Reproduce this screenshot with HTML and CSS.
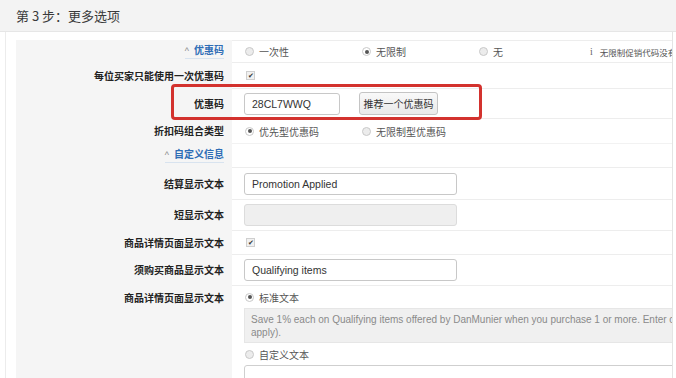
FILE: index.html
```html
<!DOCTYPE html>
<html lang="zh-CN">
<head>
<meta charset="utf-8">
<link rel="stylesheet" href="styles.css">
</head>
<body>
<div class="header"><h1>第 3 步：更多选项</h1></div>
<div class="panel">
  <div class="form">
    <div class="row r1">
      <div class="label"><span class="link"><span class="chev">^</span>优惠码</span></div>
      <div class="value">
        <span class="opt"><span class="radio"></span>一次性</span>
        <span class="opt"><span class="radio on"></span>无限制</span>
        <span class="opt narrow"><span class="radio"></span>无</span>
        <span class="info"><span class="i">i</span>无限制促销代码没有使用限制</span>
      </div>
    </div>
    <div class="row r2">
      <div class="label">每位买家只能使用一次优惠码</div>
      <div class="value"><span class="check">✔</span></div>
    </div>
    <div class="row r3">
      <div class="label">优惠码</div>
      <div class="value">
        <span class="input short">28CL7WWQ</span>
        <span class="btn">推荐一个优惠码</span>
      </div>
    </div>
    <div class="row r4">
      <div class="label">折扣码组合类型</div>
      <div class="value">
        <span class="opt"><span class="radio on"></span>优先型优惠码</span>
        <span class="opt"><span class="radio"></span>无限制型优惠码</span>
      </div>
    </div>
    <div class="row r5">
      <div class="label"><span class="link"><span class="chev">^</span>自定义信息</span></div>
      <div class="value"></div>
    </div>
    <div class="row r6">
      <div class="label">结算显示文本</div>
      <div class="value"><span class="input wide">Promotion Applied</span></div>
    </div>
    <div class="row r7">
      <div class="label">短显示文本</div>
      <div class="value"><span class="input wide disabled"></span></div>
    </div>
    <div class="row r8">
      <div class="label">商品详情页面显示文本</div>
      <div class="value"><span class="check">✔</span></div>
    </div>
    <div class="row r9">
      <div class="label">须购买商品显示文本</div>
      <div class="value"><span class="input wide">Qualifying items</span></div>
    </div>
    <div class="row r10">
      <div class="label">商品详情页面显示文本</div>
      <div class="value stack">
        <span class="opt"><span class="radio on"></span>标准文本</span>
        <div class="note">Save 1% each on Qualifying items offered by DanMunier when you purchase 1 or more. Enter code 28CL7WWQ at checkout (some restrictions may apply).</div>
        <span class="opt"><span class="radio"></span>自定义文本</span>
        <div class="textarea"></div>
      </div>
    </div>
  </div>
  <div class="highlight"></div>
</div>
</body>
</html>
```
FILE: styles.css
```css
html, body {
  margin: 0;
  padding: 0;
  background: #fff;
  width: 676px;
  height: 378px;
  overflow: hidden;
  font-family: "Liberation Sans", "Noto Sans CJK SC", sans-serif;
  color: #444;
}
.header {
  height: 31px;
  background: #f3f3f3;
  border-bottom: 1px solid #e6e6e6;
  display: flex;
  align-items: center;
  padding-left: 16px;
}
.header h1 {
  margin: 0;
  font-size: 13px;
  font-weight: normal;
  color: #3a3a3a;
  font-family: "Noto Sans CJK SC", sans-serif;
}
.panel {
  position: relative;
  margin-left: 5px;
  width: 668px;
  border-left: 1px solid #ececec;
  border-right: 1px solid #e4e4e4;
  padding: 8px 0 0 10px;
  height: 400px;
  box-sizing: border-box;
  overflow: hidden;
}
.form {
  display: flex;
  flex-direction: column;
}
.row {
  display: grid;
  grid-template-columns: 216px 1fr;
}
.label {
  background: #f5f5f5;
  display: flex;
  align-items: center;
  justify-content: flex-end;
  padding-right: 8px;
  font-family: "Noto Sans CJK SC", sans-serif;
  font-weight: bold;
  font-size: 10px;
  color: #222;
}
.value {
  border-top: 1px solid #ededed;
  display: flex;
  align-items: center;
  padding-left: 12px;
  font-family: "Noto Sans CJK SC", sans-serif;
  font-size: 10px;
  color: #555;
  white-space: nowrap;
  overflow: hidden;
  min-width: 0;
}
.r1 { height: 22px; }
.r2 { height: 26px; }
.r3 { height: 30px; }
.r4 { height: 25px; }
.r5 { height: 24px; }
.r6 { height: 32px; }
.r7 { height: 31px; }
.r8 { height: 24px; }
.r9 { height: 31px; }
.r10 { height: 120px; }
.r10 .label { align-items: flex-start; padding-top: 5px; }
.r5 .value { border-top-color: #f2f2f2; }
.link {
  color: #2f6db5;
  border-bottom: 1px solid #d8e3ef;
  line-height: 13px;
}
.chev {
  color: #888;
  font-weight: normal;
  font-size: 9px;
  margin-right: 5px;
  font-family: "Liberation Sans", sans-serif;
}
.opt {
  display: inline-flex;
  align-items: center;
  width: 117px;
  flex: none;
}
.opt.narrow { width: 112px; }
.radio {
  width: 7px;
  height: 7px;
  border-radius: 50%;
  border: 1px solid #c9c9c9;
  background: #ececec;
  margin: 0 5px 0 1px;
  position: relative;
  flex: none;
}
.radio.on {
  background: #fff;
}
.radio.on::after {
  content: "";
  position: absolute;
  left: 1.5px;
  top: 1.5px;
  width: 4px;
  height: 4px;
  border-radius: 50%;
  background: #555;
}
.info {
  display: inline-flex;
  align-items: center;
  font-size: 8.5px;
  color: #555;
  flex: none;
}
.info .i {
  font-family: "Liberation Serif", serif;
  margin: 0 7px 0 0;
  font-size: 10px;
  color: #666;
}
.check {
  display: inline-flex;
  align-items: center;
  justify-content: center;
  width: 7px;
  height: 7px;
  border: 1px solid #cfcfcf;
  background: #f1f1f1;
  font-size: 7px;
  color: #333;
  margin-left: 2px;
  line-height: 1;
  flex: none;
}
.input {
  display: inline-flex;
  align-items: center;
  height: 22px;
  box-sizing: border-box;
  border: 1px solid #c8c8c8;
  border-radius: 3px;
  padding-left: 7px;
  font-family: "Liberation Sans", sans-serif;
  font-size: 10.5px;
  color: #333;
  background: #fff;
  flex: none;
}
.input.short { width: 96px; }
.input.wide { width: 213px; }
.input.disabled { background: #efefef; border-color: #dcdcdc; }
.btn {
  margin-left: 19px;
  height: 23px;
  width: 79px;
  box-sizing: border-box;
  display: inline-flex;
  align-items: center;
  justify-content: center;
  border: 1px solid #c4c4c4;
  border-radius: 3px;
  background: linear-gradient(#f9f9f9, #e9e9e9);
  font-size: 10px;
  color: #333;
  flex: none;
}
.value.stack {
  flex-direction: column;
  align-items: flex-start;
  padding-top: 5px;
}
.value.stack .opt { height: 12px; }
.note {
  margin-top: 5px;
  width: 690px;
  box-sizing: border-box;
  height: 35px;
  background: #f0f0f0;
  border: 1px solid #e6e6e6;
  padding: 4px 6px;
  font-family: "Liberation Sans", sans-serif;
  font-size: 10px;
  line-height: 13px;
  color: #8a8a8a;
  white-space: normal;
  flex: none;
}
.value.stack .opt:nth-of-type(2) { margin-top: 5px; }
.textarea {
  margin-top: 5px;
  width: 560px;
  height: 60px;
  border: 1px solid #cfcfcf;
  border-radius: 3px;
  flex: none;
}
.highlight {
  position: absolute;
  left: 165px;
  top: 52px;
  width: 311px;
  height: 36px;
  box-sizing: border-box;
  border: 3px solid #d3322e;
  border-radius: 4px;
}
```
